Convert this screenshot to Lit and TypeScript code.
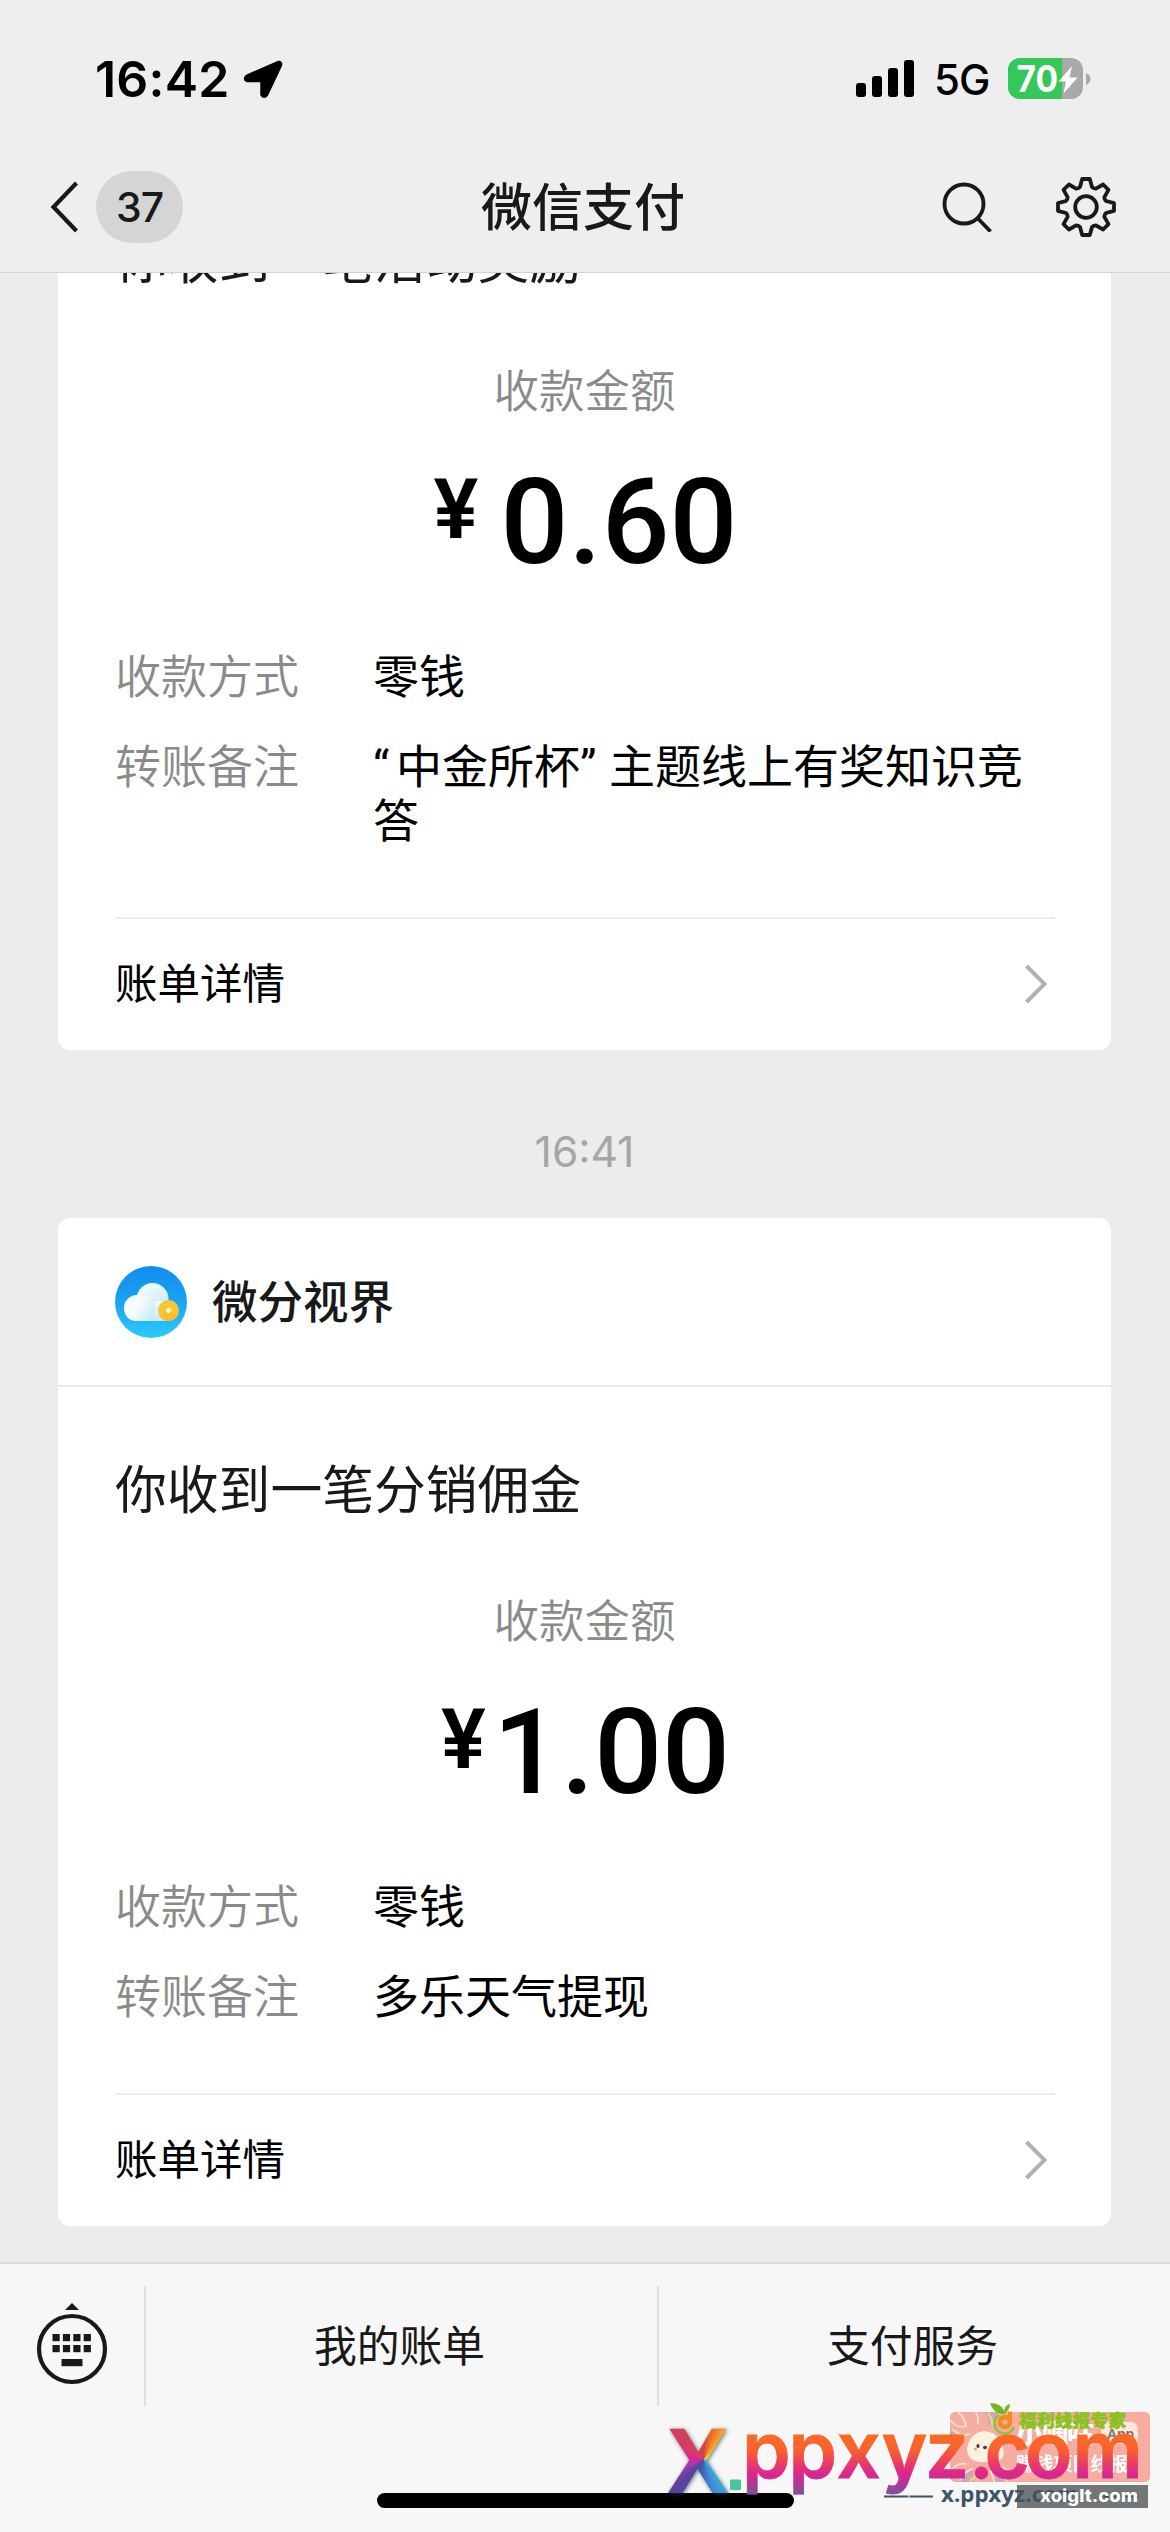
import { LitElement, html, css, svg, nothing } from "lit";
import { customElement, property } from "lit/decorators.js";

type Segment = { text: string; kind?: "open" | "close" };
type Row = { label: string; value: Segment[] };
type Receipt = {
  sender?: string;
  title: string;
  amount: string;
  rows: Row[];
};

const RECEIPTS: Receipt[] = [
  {
    title: "你收到一笔活动奖励",
    amount: "0.60",
    rows: [
      { label: "收款方式", value: [{ text: "零钱" }] },
      {
        label: "转账备注",
        value: [
          { text: "“", kind: "open" },
          { text: "中金所杯" },
          { text: "”", kind: "close" },
          { text: "主题线上有奖知识竞答" },
        ],
      },
    ],
  },
  {
    sender: "微分视界",
    title: "你收到一笔分销佣金",
    amount: "1.00",
    rows: [
      { label: "收款方式", value: [{ text: "零钱" }] },
      { label: "转账备注", value: [{ text: "多乐天气提现" }] },
    ],
  },
];

/** Outline of an eight-toothed gear centred on the origin. */
function gearPath(outer: number, inner: number, tip: number, base: number): string {
  const pts: string[] = [];
  for (let k = 0; k < 8; k++) {
    const a = (k * Math.PI) / 4;
    const place = (x: number, y: number) =>
      `${(x * Math.cos(a) - y * Math.sin(a)).toFixed(2)} ${(x * Math.sin(a) + y * Math.cos(a)).toFixed(2)}`;
    pts.push(place(-base, -inner), place(-tip, -outer), place(tip, -outer), place(base, -inner));
    const h = Math.PI / 8;
    const r = inner + 0.3;
    pts.push(place(r * Math.sin(h), -r * Math.cos(h)));
  }
  return `M${pts.join("L")}Z`;
}

@customElement("status-bar")
class StatusBar extends LitElement {
  static styles = css`
    :host { display: block; }
    .bar { display: flex; align-items: center; height: 157px; padding: 0 78px 0 95px; color: #000; }
    .time { font: 600 50px/60px Inter, sans-serif; letter-spacing: 0.2px; width: 148px; white-space: nowrap; }
    .spacer { flex: 1; }
    .net { font: 500 42px/60px Inter, sans-serif; letter-spacing: -1px; margin: 2px 0 0 19px; width: 74px; white-space: nowrap; }
    svg { display: block; }
  `;
  render() {
    return html`<div class="bar">
      <span class="time">16:42</span>
      <svg width="40" height="40" viewBox="0 0 40 40">
        <path d="M35.500 4L4.500 17.500Q1.500 19.500 4.500 21H19.500V35.500Q21 38 23 35.500L37 6Q37.500 3.500 35.500 4Z" stroke="#000" stroke-width="4.500" stroke-linejoin="round"/>
      </svg>
      <span class="spacer"></span>
      <svg width="60" height="40" viewBox="0 0 60 40">
        <rect x="1" y="24" width="10" height="14" rx="3"/>
        <rect x="17" y="17" width="10" height="21" rx="3"/>
        <rect x="33" y="9" width="10" height="29" rx="3"/>
        <rect x="49" y="1" width="10" height="37" rx="3"/>
      </svg>
      <span class="net">5G</span>
      <svg width="84" height="42" viewBox="0 0 84 42">
        <defs><clipPath id="b"><rect width="75" height="41" rx="12"/></clipPath></defs>
        <g clip-path="url(#b)">
          <rect width="75" height="41" fill="#a9a9ab"/>
          <rect width="54" height="41" fill="#35c759"/>
        </g>
        <path d="M78 15q4.500 2 4.500 6t-4.500 6z" fill="#a9a9ab"/>
        <text x="8.500" y="34" font-family="Inter, sans-serif" font-weight="700" font-size="36.500" fill="#fff" textLength="41.500" lengthAdjust="spacingAndGlyphs">70</text>
        <path d="M64 8L50.500 23.500H58L55.500 35.500L69.500 19.500H61.500Z" fill="#fff"/>
      </svg>
    </div>`;
  }
}

@customElement("nav-header")
class NavHeader extends LitElement {
  static styles = css`
    :host { display: block; }
    .nav { display: grid; grid-template-columns: 1fr auto 1fr; align-items: center; height: 100px; margin-bottom: 15px; color: #191919; }
    .left { display: flex; align-items: center; padding-left: 50px; gap: 17px; }
    .badge { width: 87px; height: 72px; border-radius: 36px; background: #d5d5d5; font: 500 41px/72px Inter, sans-serif; text-align: center; letter-spacing: -1px; }
    .title { font: 500 51px/60px "Noto Sans CJK SC", sans-serif; margin-top: -6px; padding-right: 4px; }
    .right { display: flex; align-items: center; justify-content: flex-end; gap: 62px; padding-right: 52px; }
    svg { display: block; }
  `;
  render() {
    return html`<div class="nav">
      <div class="left">
        <svg width="29" height="52" viewBox="0 0 29 52">
          <path d="M26.500 2L3.500 26L26.500 50" fill="none" stroke="#191919" stroke-width="4.200"/>
        </svg>
        <span class="badge">37</span>
      </div>
      <span class="title">微信支付</span>
      <div class="right">
        <svg width="50" height="50" viewBox="0 0 50 50" fill="none" stroke="#191919" stroke-width="3.800">
          <circle cx="22" cy="22" r="19.500"/><path d="M35.500 36L48.500 49.500"/>
        </svg>
        <svg width="64" height="64" viewBox="-32 -32 64 64" fill="none" stroke="#191919" stroke-width="3.800" stroke-linejoin="round">
          <path d=${gearPath(28, 20, 3.8, 6)}/><circle r="10.800"/>
        </svg>
      </div>
    </div>`;
  }
}

@customElement("receipt-card")
class ReceiptCard extends LitElement {
  @property({ attribute: false }) data!: Receipt;

  static styles = css`
    :host { display: block; font-family: "Noto Sans CJK SC", sans-serif; }
    .card { background: #fff; border-radius: 12px; color: #000; }
    .head { display: flex; align-items: center; gap: 25px; height: 167px; padding: 0 57px; border-bottom: 2px solid #ebebeb; }
    .head svg { display: block; }
    .sender { font-weight: 500; font-size: 45.500px; line-height: 60px; color: #191919; margin-top: -5px; }
    .body { padding: 70px 57px 73px; }
    .title { font-size: 51.800px; line-height: 60px; color: #191919; }
    .caption { margin-top: 76px; font-size: 45.500px; line-height: 50px; color: #8a8a8a; font-weight: 350; text-align: center; }
    .amount { display: flex; justify-content: center; align-items: flex-start; height: 115px; margin-top: 50px; padding-left: 2px; font-family: Roboto, sans-serif; }
    .yen { font-size: 84px; line-height: 84px; font-weight: 600; margin-top: 5px; width: 67px; }
    .num { font-size: 119.500px; line-height: 118px; font-weight: 500; }
    .num.one { margin-left: -15px; }
    .rows { display: flex; flex-direction: column; gap: 36px; margin-top: 68px; }
    .row { display: grid; grid-template-columns: 258px 1fr; font-size: 46px; line-height: 54px; }
    .label { color: #8a8a8a; font-weight: 350; }
    .value { width: 655px; }
    .q { display: inline-block; font-family: Roboto, sans-serif; line-height: 40px; }
    .open { width: 23px; }
    .close { width: 29px; }
    .foot { display: flex; justify-content: space-between; align-items: center; box-sizing: border-box; height: 133px; margin: 0 56px 0 57px; padding: 0 7px 2px 0; border-top: 2px solid #ececec; font-size: 42.500px; line-height: 56px; }
    .foot span { margin-top: -5px; }
  `;

  render() {
    const d = this.data;
    return html`<article class="card">
      ${d.sender
        ? html`<header class="head">
            <svg width="72" height="72" viewBox="0 0 72 72">
              <defs>
                <linearGradient id="sky" x2="0" y2="1"><stop stop-color="#118df0"/><stop offset=".5" stop-color="#1aa3f2"/><stop offset="1" stop-color="#2ccbfa"/></linearGradient>
                <linearGradient id="cl" x2=".7" y2="1"><stop stop-color="#fff"/><stop offset="1" stop-color="#bfe9fb"/></linearGradient>
                <linearGradient id="cl2" x2="1" y2=".6"><stop stop-color="#fff"/><stop offset=".6" stop-color="#f2fbff"/><stop offset="1" stop-color="#c6ecfb"/></linearGradient>
              </defs>
              <circle cx="36" cy="36" r="36" fill="url(#sky)"/>
              <circle cx="37.500" cy="33" r="16" fill="url(#cl)"/>
              <rect x="10" y="35" width="50" height="20" rx="10" fill="url(#cl)"/>
              <path d="M22 29a13 13 0 0 0 0 26h8a13 13 0 0 0-8-26z" fill="url(#cl2)"/>
              <circle cx="53.500" cy="44.500" r="10.500" fill="#f9c531"/>
              <path d="M45 50a10.500 10.500 0 0 0 18-1L53.500 44.500z" fill="#fbb42c" opacity=".6"/>
              <path d="M53.500 41.300l3.200 3.200-3.200 3.200-3.200-3.200z" fill="#fff8d8"/>
            </svg>
            <span class="sender">${d.sender}</span>
          </header>`
        : nothing}
      <div class="body">
        <div class="title">${d.title}</div>
        <div class="caption">收款金额</div>
        <div class="amount"><span class="yen">¥</span><span class="num ${d.amount.startsWith("1") ? "one" : ""}">${d.amount}</span></div>
        <div class="rows">
          ${d.rows.map(
            (r) => html`<div class="row">
              <span class="label">${r.label}</span>
              <span class="value">${r.value.map((s) => (s.kind ? html`<span class="q ${s.kind}">${s.text}</span>` : s.text))}</span>
            </div>`
          )}
        </div>
      </div>
      <footer class="foot">
        <span>账单详情</span>
        <svg width="24" height="40" viewBox="0 0 24 40"><path d="M2.500 2L20.500 20L2.500 38" fill="none" stroke="#b2b2b2" stroke-width="4"/></svg>
      </footer>
    </article>`;
  }
}

@customElement("menu-bar")
class MenuBar extends LitElement {
  static styles = css`
    :host { display: block; background: #f7f7f7; border-top: 2px solid #dedede; font-family: "Noto Sans CJK SC", sans-serif; }
    .menu { display: grid; grid-template-columns: 144px 513px 513px; height: 120px; padding-top: 22px; }
    .key { display: flex; justify-content: center; align-items: center; padding-bottom: 4px; }
    .item { display: flex; justify-content: center; align-items: center; box-sizing: border-box; border-left: 2px solid #e0e0e0; font-size: 42.800px; line-height: 60px; color: #191919; padding: 0 4px 6px 0; }
    .home { height: 126px; display: flex; justify-content: center; align-items: flex-end; box-sizing: border-box; padding-bottom: 24px; }
    .pill { width: 417px; height: 15px; border-radius: 8px; background: #000; }
  `;
  render() {
    const keys = [0, 1].flatMap((r) => [0, 1, 2, 3].map((c) => ({ x: 16.5 + c * 10.4, y: 31 + r * 11 })));
    return html`<div class="menu">
        <div class="key">
          <svg width="72" height="82" viewBox="0 0 72 82">
            <path d="M36 0L43 7H29Z" fill="#191919"/>
            <circle cx="36" cy="46" r="33" fill="none" stroke="#191919" stroke-width="4.200"/>
            ${keys.map((k) => svg`<rect x=${k.x} y=${k.y} width="7.200" height="7.200" fill="#191919"/>`)}
            <rect x="25.500" y="56" width="21" height="7.200" fill="#191919"/>
          </svg>
        </div>
        <div class="item">我的账单</div>
        <div class="item">支付服务</div>
      </div>
      <div class="home"><div class="pill"></div></div>`;
  }
}

@customElement("site-marks")
class SiteMarks extends LitElement {
  static styles = css`
    :host { display: block; position: absolute; left: 650px; top: 2392px; width: 520px; height: 140px; }
    .art { display: block; }
    .x { position: absolute; left: 18px; top: 26px; width: 62px; height: 80px; font: 700 90px/80px "Open Sans", sans-serif; color: transparent;
      background: conic-gradient(from 0deg at 58% 52%, #d8413c 0deg, #ef7a2a 22deg, #f6b92c 42deg, #e9e04a 60deg, #4fd0b0 100deg, #2fb8d8 135deg, #3f8fd8 160deg, #3a63b5 185deg, #5b3f9e 225deg, #a63aa8 250deg, #dd1f9d 275deg, #d63a6a 300deg, #cf4451 330deg, #d8413c 360deg);
      -webkit-background-clip: text; background-clip: text; filter: drop-shadow(1px 1px 2px rgba(40, 60, 60, 0.7)); }
  `;
  render() {
    return html`<svg class="art" width="520" height="140" viewBox="650 2392 520 140">
        <defs>
          <linearGradient id="g" gradientUnits="userSpaceOnUse" x1="0" y1="2435" x2="0" y2="2494">
            <stop stop-color="#fb6a25"/><stop offset=".25" stop-color="#f8612f"/><stop offset=".48" stop-color="#ea3c64"/><stop offset=".66" stop-color="#dc2591"/><stop offset=".85" stop-color="#a93c95"/><stop offset="1" stop-color="#80509c"/>
          </linearGradient>
          <clipPath id="card"><rect x="950" y="2412" width="200" height="70" rx="5"/></clipPath>
        </defs>
        <g clip-path="url(#card)">
          <rect x="950" y="2412" width="200" height="70" fill="#f6aca1"/>
          <path d="M950 2430q9 3 12 14q-9 4-12 12zM958 2482q6-10 16-13q-2 9 1 13zM994 2482q0-9-6-13q14 2 18 13zM985 2412q4 8 3 14q8-5 10-14z" fill="#c9a9b8"/>
          <g fill="none" stroke="#fce3ce" stroke-width="1.800" stroke-linecap="round">
            <path d="M951 2421q7 8 15 5q-1-8-7-13M953 2430q9 7 16 4M951 2470q7-8 15-6M960 2480q4-8 12-11M978 2480q2-6 0-11M990 2470q4 7 4 12M999 2466q9 2 12 12M976 2413q3 4 2 10"/>
          </g>
          <path d="M988 2413q5 7 4 12M970 2481q7-5 8-11M1000 2474q5 3 7 8" fill="none" stroke="#f6d080" stroke-width="2.500"/>
          <path d="M967 2448q3-15 17-17q15 1 19 17q3 12-8 14h-15q-13-1-13-14z" fill="#fdf1e2"/>
          <ellipse cx="978" cy="2446" rx="1.600" ry="2" fill="#443b3b"/><ellipse cx="985" cy="2447.500" rx="2" ry="1.800" fill="#443b3b"/>
          <circle cx="975.500" cy="2449" r="1.200" fill="#f08080"/>
          <text x="1016" y="2443" font-family="Noto Sans CJK SC, sans-serif" font-weight="900" font-size="27" fill="#fff" textLength="78">小嘀咕</text>
          <rect x="1101" y="2422" width="37" height="22" rx="7" fill="#fbe8da"/>
          <text x="1107" y="2439" font-family="Inter, sans-serif" font-weight="600" font-size="13.500" fill="#7a706e" textLength="27" lengthAdjust="spacingAndGlyphs">App</text>
          <text x="1016" y="2471" font-family="Noto Sans CJK SC, sans-serif" font-weight="700" font-size="19" fill="#fff" textLength="112">赚钱项目线报</text>
        </g>
        <path d="M1002 2414q-9-1-12-11q11 0 14 8q1-6 6-7q0 6-6 10z" fill="#74b81f"/>
        <path d="M998 2416a10 10 0 1 0 15.500 12" fill="none" stroke="#8ac43a" stroke-width="2.600" stroke-linecap="round"/>
        <circle cx="1005" cy="2422" r="5" fill="none" stroke="#f68a1c" stroke-width="4.600"/>
        <path d="M1010 2411.500v13" stroke="#f68a1c" stroke-width="4"/>
        <text x="1019" y="2426.500" font-family="Noto Sans CJK SC, sans-serif" font-weight="900" font-size="17.500" fill="#8bc220" stroke="#8bc220" stroke-width=".6" textLength="107">福利线报专家</text>
        <text x="742 788.500 836.500 881.500 925 969 984.500 1025 1072.500" y="2478" font-family="Inter, sans-serif" font-weight="600" font-size="78" fill="url(#g)" stroke="url(#g)" stroke-width=".8">ppxyz.com</text>
        <rect x="1017" y="2485" width="131" height="23" fill="#747777"/>
        <path d="M884 2496.500h24.500m1 0H933M1098 2496.500h40" stroke="#3e5468" stroke-width="1.800"/>
        <text x="941" y="2501.500" font-family="Noto Sans, sans-serif" font-weight="700" font-size="21" fill="#3e5468" textLength="138" lengthAdjust="spacingAndGlyphs">x.ppxyz.com</text>
        <text x="1040" y="2501.500" font-family="Inter, sans-serif" font-weight="800" font-size="17" fill="#fff" textLength="98" lengthAdjust="spacingAndGlyphs">xoiglt.com</text>
        <rect x="730" y="2479.500" width="11" height="10.500" rx="1" fill="#46c79b"/>
      </svg>
      <div class="x">X</div>`;
  }
}

@customElement("app-root")
class AppRoot extends LitElement {
  static styles = css`
    :host { display: block; position: relative; width: 1170px; height: 2532px; overflow: hidden; }
    .page { display: flex; flex-direction: column; height: 100%; background: #ececec; }
    .top { flex: none; box-sizing: border-box; height: 273px; background: #eeeeee; border-bottom: 1px solid #d2d2d2; }
    .chat { flex: 1; min-height: 0; overflow: hidden; display: flex; flex-direction: column; justify-content: flex-end; padding: 0 59px 36px 58px; }
    .stamp { flex: none; box-sizing: border-box; padding-top: 72px; font: 400 42.500px/60px Inter, sans-serif; letter-spacing: 0; height: 168px; text-align: center; color: #a6a6a6; }
    receipt-card { flex: none; }
  `;
  render() {
    return html`<div class="page">
        <div class="top"><status-bar></status-bar><nav-header></nav-header></div>
        <main class="chat">
          <receipt-card .data=${RECEIPTS[0]}></receipt-card>
          <div class="stamp">16:41</div>
          <receipt-card .data=${RECEIPTS[1]}></receipt-card>
        </main>
        <menu-bar></menu-bar>
      </div>
      <site-marks></site-marks>`;
  }
}
